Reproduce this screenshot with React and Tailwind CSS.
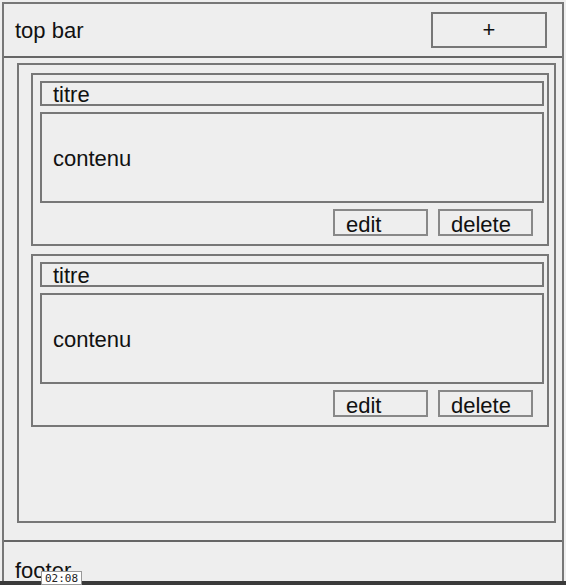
import React from 'react';

const cards = [
  { id: 1, title: 'titre', body: 'contenu' },
  { id: 2, title: 'titre', body: 'contenu' }
];

function Card({ title, body }) {
  return (
    <div className="border-2 border-[#777] pt-[6px] pl-[7px] pr-[3px] pb-[8px] flex flex-col gap-[6px]">
      <div className="h-[25px] border-2 border-[#777] pl-[11px] pt-[2px] flex items-center text-[22px] leading-none">
        {title}
      </div>
      <div className="h-[91px] border-2 border-[#777] pl-[11px] pt-[3px] flex items-center text-[22px] leading-none">
        {body}
      </div>
      <div className="flex justify-end gap-[10px] pr-[11px]">
        <button className="w-[95px] h-[27px] border-2 border-[#888] text-left pl-[11px] pt-[3px] text-[22px] leading-none">
          edit
        </button>
        <button className="w-[95px] h-[27px] border-2 border-[#888] text-left pl-[11px] pt-[3px] text-[22px] leading-none">
          delete
        </button>
      </div>
    </div>
  );
}

export default function App() {
  return (
    <div
      className="relative w-[566px] h-[585px] overflow-hidden bg-[#eeeeee] text-[#111]"
      style={{ fontFamily: '"Liberation Sans", Arial, sans-serif' }}
    >
      <div className="mx-[2px] mt-[2px] h-[600px] border-2 border-b-0 border-[#777] flex flex-col">
        <div className="h-[54px] border-b-2 border-[#666] flex items-center justify-between pl-[11px] pr-[15px]">
          <span className="text-[22px]">top bar</span>
          <button className="w-[116px] h-[36px] border-2 border-[#777] text-[22px] leading-none">+</button>
        </div>

        <div className="mt-[5px] ml-[13px] mr-[6px] h-[460px] border-2 border-[#777] pl-[12px] pr-[5px] pt-[8px] flex flex-col gap-[8px]">
          {cards.map(card => (
            <Card key={card.id} title={card.title} body={card.body} />
          ))}
        </div>

        <div className="mt-[17px] border-t-2 border-[#666] pl-[11px] pt-[12px]">
          <span className="text-[22px]">footer</span>
        </div>
      </div>

      {/* timeline bar over the bottom */}
      <div className="absolute left-0 right-0 bottom-0 h-[4px] bg-[#3a3a3a]" />
      <div
        className="absolute left-[41px] bottom-0 h-[14px] px-[3px] bg-white border border-[#999] text-[11px] leading-[13px] text-[#222]"
        style={{ fontFamily: '"DejaVu Sans Mono", monospace' }}
      >
        02:08
      </div>
    </div>
  );
}
